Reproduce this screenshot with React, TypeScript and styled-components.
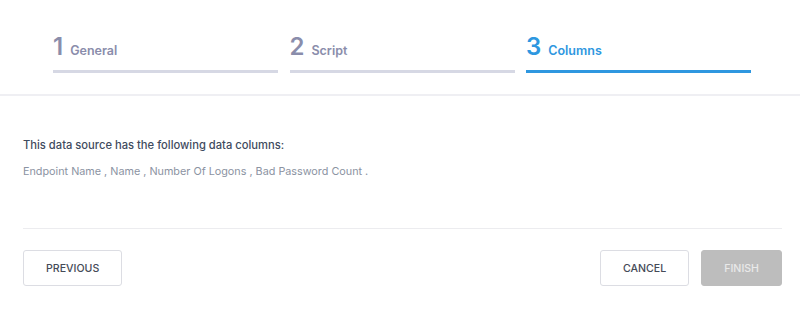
import React from "react";
import styled, { createGlobalStyle } from "styled-components";

const steps = [
  { number: 1, label: "General" },
  { number: 2, label: "Script" },
  { number: 3, label: "Columns" },
];

const activeStep = 3;

const columns = ["Endpoint Name", "Name", "Number Of Logons", "Bad Password Count"];

const App: React.FC = () => {
  return (
    <>
      <GlobalStyle />
      <Wizard>
        <StepHeader>
          <StepList>
            {steps.map((step) => (
              <Step key={step.number} $active={step.number === activeStep}>
                <StepNumber>{step.number}</StepNumber>
                <StepLabel>{step.label}</StepLabel>
              </Step>
            ))}
          </StepList>
        </StepHeader>
        <Body>
          <Lead>This data source has the following data columns:</Lead>
          <ColumnText>{columns.join(" , ")} .</ColumnText>
        </Body>
        <Footer>
          <Button>PREVIOUS</Button>
          <Actions>
            <Button>CANCEL</Button>
            <Button $disabled>FINISH</Button>
          </Actions>
        </Footer>
      </Wizard>
    </>
  );
};

export default App;

// Styled Components

const GlobalStyle = createGlobalStyle`
  html, body {
    margin: 0;
    padding: 0;
    background: #ffffff;
  }

  body {
    font-family: Inter, "Noto Sans", sans-serif;
  }
`;

const Wizard = styled.div`
  width: 800px;
  height: 322px;
  display: flex;
  flex-direction: column;
  background: #ffffff;
`;

const StepHeader = styled.div`
  height: 94px;
  border-bottom: 2px solid #efeff3;
  padding: 0 49px 0 53px;
  box-sizing: content-box;
`;

const StepList = styled.div`
  display: grid;
  grid-template-columns: repeat(3, 1fr);
  column-gap: 11.5px;
  padding-top: 34px;
`;

const Step = styled.div<{ $active?: boolean }>`
  display: flex;
  align-items: baseline;
  gap: 7px;
  height: 39px;
  box-sizing: border-box;
  border-bottom: 3px solid ${({ $active }) => ($active ? "#2e97e0" : "#d6d8e4")};
  color: ${({ $active }) => ($active ? "#2e97e0" : "#8a8dab")};
`;

const StepNumber = styled.span`
  font-size: 24px;
  font-weight: 600;
  line-height: 26px;
`;

const StepLabel = styled.span`
  font-size: 12.5px;
  font-weight: 600;
`;

const Body = styled.div`
  margin: 0 18px 0 23px;
  padding-top: 40px;
  height: 92px;
  border-bottom: 1px solid #ececef;
`;

const Lead = styled.p`
  margin: 0;
  font-size: 11.2px;
  font-weight: 500;
  line-height: 18px;
  color: #3f4b5e;
`;

const ColumnText = styled.p`
  margin: 9px 0 0;
  font-size: 10.8px;
  font-weight: 400;
  line-height: 18px;
  color: #8b93a2;
`;

const Footer = styled.div`
  display: flex;
  justify-content: space-between;
  padding: 21px 18px 0 23px;
`;

const Actions = styled.div`
  display: flex;
  gap: 12px;
`;

const Button = styled.button<{ $disabled?: boolean }>`
  height: 36px;
  padding: 0 22px;
  border-radius: 3px;
  border: 1px solid ${({ $disabled }) => ($disabled ? "#bdbdbd" : "#dcdde3")};
  background: ${({ $disabled }) => ($disabled ? "#bdbdbd" : "#ffffff")};
  color: ${({ $disabled }) => ($disabled ? "#e9e9e9" : "#454a57")};
  font-family: Inter, "Noto Sans", sans-serif;
  font-size: 10.6px;
  font-weight: 500;
  cursor: ${({ $disabled }) => ($disabled ? "default" : "pointer")};
`;
